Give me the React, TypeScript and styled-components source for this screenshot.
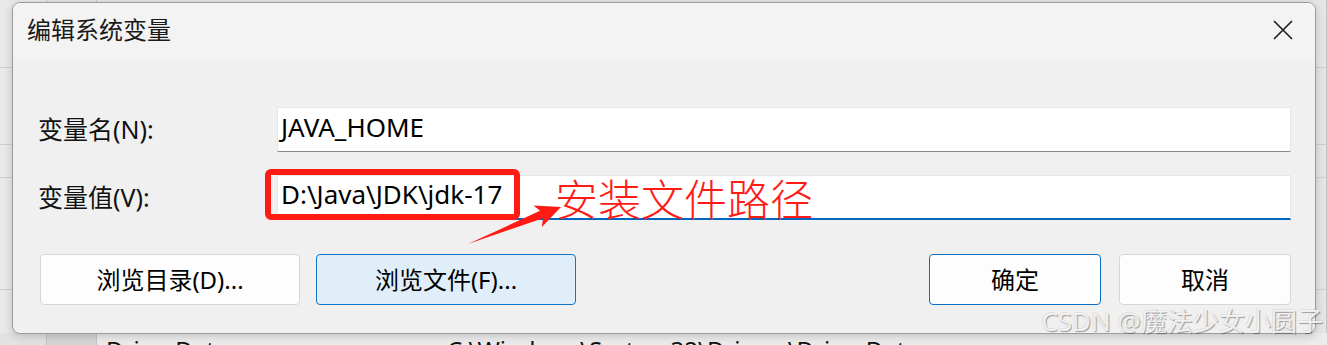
import React from "react";
import styled, { createGlobalStyle } from "styled-components";

const Global = createGlobalStyle`
  html, body { margin: 0; padding: 0; }
  body { width: 1327px; height: 345px; overflow: hidden; background: #e4e4e4; }
  * { box-sizing: border-box; }
`;

const UI_FONT = `"Noto Sans", "Noto Sans CJK SC", sans-serif`;

const Desktop = styled.div`
  position: relative;
  width: 1327px;
  height: 345px;
  overflow: hidden;
  background: #e6e6e6;
  font-family: ${UI_FONT};
`;

/* window behind the dialog */
const BackWindow = styled.div`
  display: flex;
  flex-direction: column;
  height: 100%;
`;

const BackRow = styled.div<{ $h: number; $line?: boolean }>`
  height: ${(p) => p.$h}px;
  flex: none;
  display: grid;
  grid-template-columns: 47px 50px 1fr;
  border-bottom: ${(p) => (p.$line ? "1px solid #cfcfcf" : "none")};
`;

const BackCell = styled.div<{ $bg?: string }>`
  border-right: 1px solid #c4c4c4;
  background: ${(p) => p.$bg || "transparent"};
  overflow: hidden;
  white-space: nowrap;
`;

const BackText = styled.div`
  display: flex;
  padding-left: 9px;
  padding-top: 2px;
  font-size: 24px;
  line-height: 30px;
  color: #111;
  background: #ececec;
  height: 100%;
`;

const BackName = styled.span`
  width: 341px;
  flex: none;
`;

const Dialog = styled.div`
  position: absolute;
  left: 12px;
  top: 2px;
  width: 1304px;
  height: 332px;
  border: 1px solid #9c9c9c;
  border-radius: 8px;
  overflow: hidden;
  background: #f0f0f0;
  box-shadow: 0 2px 10px rgba(0, 0, 0, 0.18);
  display: flex;
  flex-direction: column;
`;

const TitleBar = styled.div`
  height: 57px;
  flex: none;
  background: #f3f3f3;
  display: flex;
  align-items: center;
  justify-content: space-between;
  padding: 0 22px 0 14px;
`;

const Title = styled.div`
  font-size: 24px;
  color: #1a1a1a;
  line-height: 1;
  margin-top: -3px;
`;

const CloseButton = styled.div`
  width: 20px;
  height: 20px;
  display: flex;
  margin-top: -3px;
`;

const Body = styled.div`
  flex: 1;
  padding: 47px 24px 0 27px;
  display: flex;
  flex-direction: column;
`;

const FieldGrid = styled.div`
  display: grid;
  grid-template-columns: 237px 1fr;
  row-gap: 23px;
  align-items: center;
`;

const Label = styled.div`
  font-size: 25px;
  color: #111;
  margin-left: -2px;
  margin-top: -3px;
`;

const FieldWrap = styled.div`
  position: relative;
`;

const TextField = styled.div<{ $focused?: boolean }>`
  height: 45px;
  background: #ffffff;
  border: 1px solid #e6e6e6;
  border-bottom: ${(p) => (p.$focused ? "2px solid #0067c0" : "1px solid #888888")};
  display: flex;
  align-items: center;
  padding: 0 0 6px 3px;
  font-size: 26px;
  color: #000;
  white-space: nowrap;
`;

const Highlight = styled.div`
  position: absolute;
  left: -12px;
  top: -6px;
  width: 255px;
  height: 51px;
  border: 6px solid #ff1a14;
  border-radius: 6px;
  pointer-events: none;
`;

const Annotation = styled.div`
  position: absolute;
  left: 278px;
  top: 1px;
  font-family: "Noto Sans CJK SC", sans-serif;
  font-size: 43px;
  line-height: 43px;
  font-weight: 300;
  color: #ff1a14;
  white-space: nowrap;
`;

const ArrowSvg = styled.svg`
  position: absolute;
  left: 183px;
  top: 25px;
  overflow: visible;
`;

const ButtonRow = styled.div`
  display: flex;
  align-items: center;
  margin-top: 34px;
  gap: 16px;
`;

const Spacer = styled.div`
  flex: 1;
`;

const Button = styled.div<{ $w: number; $variant?: "default" | "hover" | "primary"; $gapLeft?: number }>`
  width: ${(p) => p.$w}px;
  height: 51px;
  margin-left: ${(p) => p.$gapLeft || 0}px;
  border-radius: 4px;
  display: flex;
  align-items: center;
  justify-content: center;
  font-size: 24px;
  color: #000;
  background: ${(p) => (p.$variant === "hover" ? "#e0eef9" : "#fdfdfd")};
  border: 1px solid
    ${(p) => (p.$variant === "hover" ? "#0f75c8" : p.$variant === "primary" ? "#0a6fc2" : "#d6d6d6")};
  padding-bottom: 2px;
`;

const Watermark = styled.div`
  position: absolute;
  right: 4px;
  bottom: 11px;
  font-family: "Noto Sans", "Noto Sans CJK SC", sans-serif;
  font-size: 26px;
  line-height: 26px;
  color: rgba(246, 246, 246, 0.92);
  text-shadow: 1px 1px 1px rgba(0, 0, 0, 0.35), -1px -1px 0 rgba(0, 0, 0, 0.08);
  white-space: nowrap;
  pointer-events: none;
`;

export default function App() {
  return (
    <>
      <Global />
      <Desktop>
        <BackWindow>
          <BackRow $h={68} $line>
            <BackCell $bg="#e9e9e9" />
            <BackCell $bg="#e4e4e4" />
            <BackCell />
          </BackRow>
          <BackRow $h={77} $line>
            <BackCell $bg="#e9e9e9" />
            <BackCell $bg="#e4e4e4" />
            <BackCell />
          </BackRow>
          <BackRow $h={33} $line>
            <BackCell $bg="#e9e9e9" />
            <BackCell $bg="#e4e4e4" />
            <BackCell />
          </BackRow>
          <BackRow $h={112} $line>
            <BackCell $bg="#e9e9e9" />
            <BackCell $bg="#e4e4e4" />
            <BackCell />
          </BackRow>
          <BackRow $h={43}>
            <BackCell $bg="#e9e9e9" />
            <BackCell $bg="#dcdcdc" />
            <BackCell />
          </BackRow>
          <BackRow $h={40}>
            <BackCell $bg="#e2e2e2" />
            <BackCell $bg="#d6d6d6" />
            <BackText>
              <BackName>DriverData</BackName>
              <span>C:\Windows\System32\Drivers\DriverData</span>
            </BackText>
          </BackRow>
        </BackWindow>

        <Dialog>
          <TitleBar>
            <Title>编辑系统变量</Title>
            <CloseButton>
              <svg width="20" height="20" viewBox="0 0 20 20">
                <path d="M1 1 L19 19 M19 1 L1 19" stroke="#1b1b1b" strokeWidth="1.6" fill="none" />
              </svg>
            </CloseButton>
          </TitleBar>
          <Body>
            <FieldGrid>
              <Label>变量名(N):</Label>
              <FieldWrap>
                <TextField>JAVA_HOME</TextField>
              </FieldWrap>
              <Label>变量值(V):</Label>
              <FieldWrap>
                <TextField $focused>D:\Java\JDK\jdk-17</TextField>
                <Highlight />
                <Annotation>安装文件路径</Annotation>
                <ArrowSvg width="110" height="50" viewBox="0 0 110 50">
                  <polygon
                    points="8,44 83,18.2 81.9,27 101,7 73.5,5.5 80,10.8"
                    fill="#ff1a14"
                  />
                </ArrowSvg>
              </FieldWrap>
            </FieldGrid>
            <ButtonRow>
              <Button $w={260}>浏览目录(D)...</Button>
              <Button $w={260} $variant="hover">浏览文件(F)...</Button>
              <Spacer />
              <Button $w={172} $variant="primary">确定</Button>
              <Button $w={172} $gapLeft={2}>取消</Button>
            </ButtonRow>
          </Body>
        </Dialog>

        <Watermark>CSDN @魔法少女小圆子</Watermark>
      </Desktop>
    </>
  );
}
